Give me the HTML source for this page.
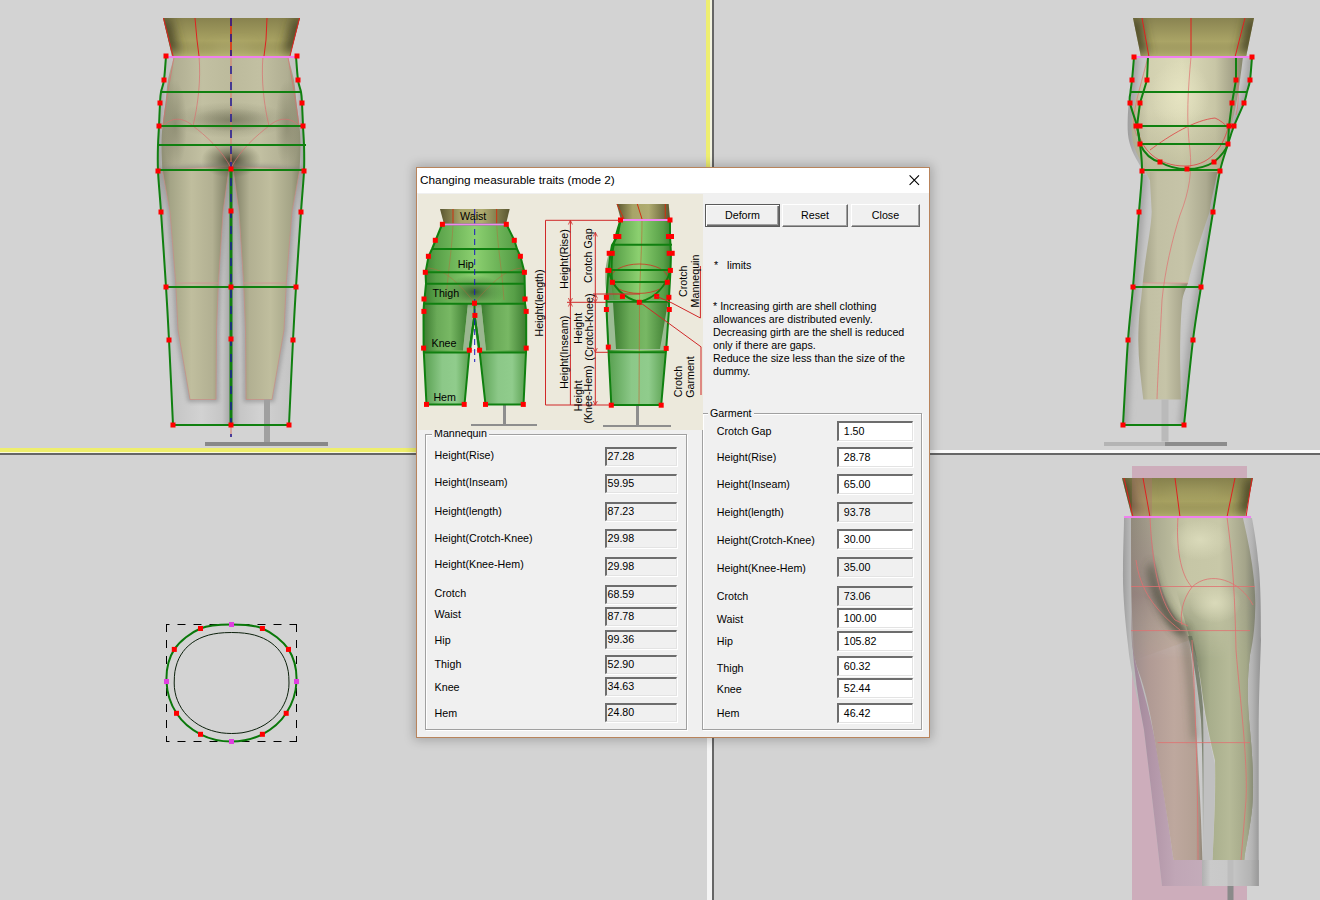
<!DOCTYPE html>
<html><head><meta charset="utf-8">
<style>
*{box-sizing:border-box}
html,body{margin:0;padding:0;width:1320px;height:900px;overflow:hidden;background:#d3d3d3;font-family:"Liberation Sans",sans-serif}
.abs{position:absolute}
#bg{position:absolute;left:0;top:0}
#dlg{position:absolute;left:416px;top:167px;width:514px;height:571px;border:1px solid #b8845c;background:#f0f0f0;box-shadow:0 0 10px 2px rgba(0,0,0,0.22)}
#title{position:absolute;left:0;top:0;width:512px;height:25px;background:#fff}
#title span{position:absolute;left:3px;top:5px;font-size:11.8px;color:#000;white-space:nowrap}
.t{position:absolute;font-size:10.7px;color:#000;white-space:nowrap;line-height:13px}
.btn{position:absolute;top:36px;height:23px;background:#f0f0f0;border:1px solid;border-color:#fff #696969 #696969 #fff;box-shadow:inset -1px -1px 0 #a0a0a0}
.btn span{position:absolute;left:0;right:0;top:4px;text-align:center;font-size:10.7px;line-height:13px}
.btn.def{border:1px solid #5a5a5a;box-shadow:inset 1px 1px 0 #fff, inset -1px -1px 0 #696969, inset -2px -2px 0 #a0a0a0}
.btn.def span{top:4px}
.grp{position:absolute;border:1px solid #a0a0a0;box-shadow:1px 1px 0 #fff, inset 1px 1px 0 #fff}
.gl{position:absolute;background:#f0f0f0;padding:0 2px;font-size:10.7px;line-height:12px}
.box{position:absolute;height:19px;border-top:2px solid #6d6d6d;border-left:2px solid #6d6d6d;border-right:1px solid #e3e3e3;border-bottom:1px solid #e3e3e3;box-shadow:1px 1px 0 #fff;background:#fff}
.box.dis{background:#f0f0f0}
.box span{position:absolute;left:1px;top:0.6px;font-size:10.7px;line-height:13px}
</style></head><body>
<svg id="bg" width="1320" height="900" viewBox="0 0 1320 900">
  <!-- dividers -->
  <rect x="0" y="448" width="710" height="4" fill="#eeee6c"/>
  <rect x="0" y="452" width="710" height="1" fill="#fafad8"/>
  <rect x="0" y="453" width="1320" height="2" fill="#666"/>
  <rect x="714" y="450" width="606" height="3" fill="#fafafa"/>
  <rect x="706" y="0" width="4" height="452" fill="#eeee70"/>
  <rect x="710" y="0" width="2" height="452" fill="#f4f4e0"/>
  <rect x="707" y="455" width="5" height="445" fill="#f4f4f4"/>
  <rect x="712" y="0" width="2" height="900" fill="#666"/>
  <g id="figs"><defs>
<linearGradient id="cone" x1="0" x2="1" y1="0" y2="0">
 <stop offset="0" stop-color="#4e4a28"/><stop offset="0.25" stop-color="#a09858"/><stop offset="0.5" stop-color="#b8b070"/><stop offset="0.75" stop-color="#a09858"/><stop offset="1" stop-color="#4e4a28"/></linearGradient>
<linearGradient id="cone2" x1="0" x2="1" y1="0" y2="0">
 <stop offset="0" stop-color="#4e4a28"/><stop offset="0.3" stop-color="#a8a060"/><stop offset="0.6" stop-color="#b8b070"/><stop offset="0.85" stop-color="#a09858"/><stop offset="1" stop-color="#4e4a28"/></linearGradient>
<linearGradient id="shell" x1="0" x2="1" y1="0" y2="0">
 <stop offset="0" stop-color="#a8a8a8"/><stop offset="0.12" stop-color="#c4c4c4"/><stop offset="0.5" stop-color="#d6d6d6"/><stop offset="0.88" stop-color="#c4c4c4"/><stop offset="1" stop-color="#a0a0a0"/></linearGradient>
<linearGradient id="leg" x1="0" x2="1" y1="0" y2="0">
 <stop offset="0" stop-color="#8c8c6c"/><stop offset="0.3" stop-color="#b4b494"/><stop offset="0.55" stop-color="#bcbc9c"/><stop offset="1" stop-color="#8a8a6c"/></linearGradient>
<linearGradient id="hip" x1="0" x2="1" y1="0" y2="0">
 <stop offset="0" stop-color="#8a8a6a"/><stop offset="0.15" stop-color="#b0b090"/><stop offset="0.5" stop-color="#bdbd9d"/><stop offset="0.85" stop-color="#b0b090"/><stop offset="1" stop-color="#8a8a6a"/></linearGradient>
<radialGradient id="crotch" cx="0.5" cy="0.5" r="0.5">
 <stop offset="0" stop-color="#404030" stop-opacity="0.9"/><stop offset="0.6" stop-color="#606048" stop-opacity="0.35"/><stop offset="1" stop-color="#808060" stop-opacity="0"/></radialGradient>
<linearGradient id="side" x1="0" x2="1" y1="0" y2="0">
 <stop offset="0" stop-color="#a0a080"/><stop offset="0.2" stop-color="#cfcfa8"/><stop offset="0.5" stop-color="#dcdcb4"/><stop offset="0.8" stop-color="#c4c49c"/><stop offset="1" stop-color="#8a8a6a"/></linearGradient>
<linearGradient id="shell3" x1="0" x2="1" y1="0" y2="0">
 <stop offset="0" stop-color="#909090"/><stop offset="0.1" stop-color="#b8b8b8"/><stop offset="0.5" stop-color="#d8d8d8"/><stop offset="0.9" stop-color="#b8b8b8"/><stop offset="1" stop-color="#909090"/></linearGradient>
<linearGradient id="leg3" x1="0" x2="1" y1="0" y2="0">
 <stop offset="0" stop-color="#8a9070"/><stop offset="0.4" stop-color="#b4b894"/><stop offset="0.7" stop-color="#b0b490"/><stop offset="1" stop-color="#7c8064"/></linearGradient>
<linearGradient id="side3" x1="0" x2="1" y1="0" y2="0">
 <stop offset="0" stop-color="#909078"/><stop offset="0.4" stop-color="#c4c4a4"/><stop offset="0.6" stop-color="#d0d0b0"/><stop offset="0.9" stop-color="#a0a088"/><stop offset="1" stop-color="#707060"/></linearGradient>
<linearGradient id="pleg" x1="0" x2="1" y1="0" y2="0">
 <stop offset="0" stop-color="#9c8a8a"/><stop offset="0.4" stop-color="#bca8a0"/><stop offset="0.8" stop-color="#b8a498"/><stop offset="1" stop-color="#8a8070"/></linearGradient>
<linearGradient id="cone3" x1="0" x2="1" y1="0" y2="0">
 <stop offset="0" stop-color="#4e4a28"/><stop offset="0.3" stop-color="#8c8848"/><stop offset="0.55" stop-color="#aaa460"/><stop offset="0.8" stop-color="#8c8848"/><stop offset="1" stop-color="#4e4a28"/></linearGradient>
<linearGradient id="conev" x1="0" x2="0" y1="0" y2="1"><stop offset="0" stop-color="#3c3820" stop-opacity="0.3"/><stop offset="0.6" stop-color="#3c3820" stop-opacity="0"/><stop offset="1" stop-color="#d0cc8a" stop-opacity="0.35"/></linearGradient>
</defs>
<g id='f1'><defs>
<linearGradient id="f1shL" x1="157" x2="231" y1="0" y2="0" gradientUnits="userSpaceOnUse">
 <stop offset="0" stop-color="#9c9c9c"/><stop offset="0.12" stop-color="#c2c2c2"/><stop offset="0.6" stop-color="#d2d2d2"/><stop offset="0.88" stop-color="#c6c6c6"/><stop offset="1" stop-color="#a4a4a4"/></linearGradient>
<linearGradient id="f1shR" x1="231" x2="306" y1="0" y2="0" gradientUnits="userSpaceOnUse">
 <stop offset="0" stop-color="#a4a4a4"/><stop offset="0.12" stop-color="#c6c6c6"/><stop offset="0.4" stop-color="#d2d2d2"/><stop offset="0.88" stop-color="#c2c2c2"/><stop offset="1" stop-color="#9c9c9c"/></linearGradient>
<linearGradient id="f1legL" x1="160" x2="230" y1="0" y2="0" gradientUnits="userSpaceOnUse">
 <stop offset="0" stop-color="#7e7e62"/><stop offset="0.15" stop-color="#a4a486"/><stop offset="0.45" stop-color="#c0be9e"/><stop offset="0.75" stop-color="#b2b092"/><stop offset="1" stop-color="#7a7a60"/></linearGradient>
<linearGradient id="f1legR" x1="232" x2="302" y1="0" y2="0" gradientUnits="userSpaceOnUse">
 <stop offset="0" stop-color="#7a7a60"/><stop offset="0.25" stop-color="#b2b092"/><stop offset="0.55" stop-color="#c0be9e"/><stop offset="0.85" stop-color="#a4a486"/><stop offset="1" stop-color="#7e7e62"/></linearGradient>
<linearGradient id="f1hip" x1="160" x2="302" y1="0" y2="0" gradientUnits="userSpaceOnUse">
 <stop offset="0" stop-color="#8a8a70"/><stop offset="0.1" stop-color="#b0ae92"/><stop offset="0.3" stop-color="#c2c0a2"/><stop offset="0.5" stop-color="#bcba9c"/><stop offset="0.7" stop-color="#c2c0a2"/><stop offset="0.9" stop-color="#b0ae92"/><stop offset="1" stop-color="#8a8a70"/></linearGradient>
<radialGradient id="f1dark" cx="0.5" cy="0.5" r="0.5">
 <stop offset="0" stop-color="#3a3a2a" stop-opacity="0.95"/><stop offset="0.5" stop-color="#5a5a44" stop-opacity="0.5"/><stop offset="1" stop-color="#6a6a50" stop-opacity="0"/></radialGradient>
<radialGradient id="f1band" cx="0.5" cy="0.5" r="0.5">
 <stop offset="0" stop-color="#6a6a52" stop-opacity="0.45"/><stop offset="1" stop-color="#6a6a52" stop-opacity="0"/></radialGradient>
<linearGradient id="f1cone" x1="163" x2="300" y1="0" y2="0" gradientUnits="userSpaceOnUse">
 <stop offset="0" stop-color="#4a4628"/><stop offset="0.15" stop-color="#7a7444"/><stop offset="0.35" stop-color="#aaa266"/><stop offset="0.5" stop-color="#b4ac6e"/><stop offset="0.65" stop-color="#aaa266"/><stop offset="0.85" stop-color="#7a7444"/><stop offset="1" stop-color="#4a4628"/></linearGradient>
<filter id="f1blur2" x="-30%" y="-30%" width="160%" height="160%"><feGaussianBlur stdDeviation="6"/></filter>
</defs><polygon points="166,56 164,80 161,92 160,103 159,126 158,145 158,171 161,212 166,287 169,340 173,425 231,425 231,169 231,56" fill="url(#f1shL)"/><polygon points="231,56 231,169 231,425 289,425 293,340 296,287 301,212 304,171 304,145 303,126 302,103 301,92 298,80 296,56" fill="url(#f1shR)"/><path d="M174,57 C173.0,60.8 169.4,72.3 168,80 C166.6,87.7 166.4,95.3 165.5,103 C164.6,110.7 163.2,119.0 162.5,126 C161.8,133.0 161.5,137.7 161.5,145 C161.5,152.3 162.2,165.8 162.3,170 L299.7,170 C299.8,165.8 300.5,152.3 300.5,145 C300.5,137.7 300.2,133.0 299.5,126 C298.8,119.0 297.4,110.7 296.5,103 C295.6,95.3 295.4,87.7 294,80 C292.6,72.3 289.0,60.8 288,57 Z" fill="url(#f1hip)"/><filter id="f1blur" x="-20%" y="-5%" width="140%" height="110%"><feGaussianBlur stdDeviation="2"/></filter><g filter="url(#f1blur)" opacity="0.55"><polygon points="162.3,170 170,212 175.7,283 178,330 190,399.5 216,399.5 216.5,330 218.4,283 223,212 228.5,172 231,166" fill="none" stroke="#7a7a7a" stroke-width="5"/><polygon points="299.7,170 292,212 286.3,283 284,330 272,399.5 246,399.5 245.5,330 243.6,283 239,212 233.5,172 231,166" fill="none" stroke="#7a7a7a" stroke-width="5"/></g><polygon points="162.3,170 170,212 175.7,283 178,330 190,399.5 216,399.5 216.5,330 218.4,283 223,212 228.5,172 231,166" fill="url(#f1legL)" stroke="#c88c84" stroke-width="0.7"/><polygon points="299.7,170 292,212 286.3,283 284,330 272,399.5 246,399.5 245.5,330 243.6,283 239,212 233.5,172 231,166" fill="url(#f1legR)" stroke="#c88c84" stroke-width="0.7"/><ellipse cx="231" cy="120" rx="60" ry="18" fill="url(#f1band)"/><ellipse cx="231" cy="120" rx="40" ry="12" fill="url(#f1band)"/><ellipse cx="231" cy="160" rx="30" ry="18" fill="url(#f1dark)"/><ellipse cx="175" cy="125" rx="12" ry="45" fill="url(#f1band)"/><ellipse cx="287" cy="125" rx="12" ry="45" fill="url(#f1band)"/><path d="M175.7,283 L218.4,283 M243.6,283 L286.3,283" stroke="#d09090" stroke-width="0.8"/><path d="M199,56 C201,80 198,105 193,126 M263,56 C261,80 264,105 269,126 M163,126 C170,118 182,116 193,126 C205,135 222,150 231,168 M299,126 C292,118 280,116 269,126 C257,135 240,150 231,168 M174,57 C170,80 166,100 163,126 M288,57 C292,80 296,100 299,126" fill="none" stroke="#d87070" stroke-width="0.7"/><polygon points="163,18 300,18 290,56 172,56" fill="#a8a262"/><clipPath id="f1cc"><polygon points="163,18 300,18 290,56 172,56"/></clipPath><g clip-path="url(#f1cc)"><g filter="url(#f1blur2)"><path d="M163,18 L173,56 M300,18 L290,56" stroke="#3e3a20" stroke-width="14" opacity="0.9"/><path d="M215,50 L250,50" stroke="#c0bc80" stroke-width="10" opacity="0.5"/></g></g><polygon points="163,18 300,18 290,56 172,56" fill="url(#conev)"/><path d="M163.5,18 L173,56 M299.5,18 L290,56 M195,18 L197,40 L199,56 M267,18 L266,40 L264,56 " stroke="#e02020" stroke-width="1" fill="none"/><path d="M231,18 L231,56" stroke="#e03010" stroke-width="1.6"/><path d="M231,56 L231,437" stroke="#d87a6a" stroke-width="1"/><rect x="264" y="399.5" width="6" height="44" fill="#a0a0a0"/><rect x="205" y="442" width="123" height="4" fill="#888888"/><path d="M166,56 C165.7,60.0 164.8,74.0 164,80 C163.2,86.0 161.7,88.2 161,92 C160.3,95.8 160.3,97.3 160,103 C159.7,108.7 159.3,119.0 159,126 C158.7,133.0 158.2,137.5 158,145 C157.8,152.5 157.5,159.8 158,171 C158.5,182.2 159.7,192.7 161,212 C162.3,231.3 164.7,265.7 166,287 C167.3,308.3 167.8,317.0 169,340 C170.2,363.0 172.3,410.8 173,425" fill="none" stroke="#108010" stroke-width="2"/><path d="M296,56 C296.3,60.0 297.2,74.0 298,80 C298.8,86.0 300.3,88.2 301,92 C301.7,95.8 301.7,97.3 302,103 C302.3,108.7 302.7,119.0 303,126 C303.3,133.0 303.8,137.5 304,145 C304.2,152.5 304.5,159.8 304,171 C303.5,182.2 302.3,192.7 301,212 C299.7,231.3 297.3,265.7 296,287 C294.7,308.3 294.2,317.0 293,340 C291.8,363.0 289.7,410.8 289,425" fill="none" stroke="#108010" stroke-width="2"/><line x1="161" y1="92" x2="301" y2="92" stroke="#108010" stroke-width="2"/><line x1="159" y1="126" x2="303" y2="126" stroke="#108010" stroke-width="2"/><line x1="157" y1="145" x2="306" y2="145" stroke="#108010" stroke-width="2"/><line x1="158" y1="170" x2="304" y2="170" stroke="#108010" stroke-width="2"/><line x1="166" y1="287" x2="296" y2="287" stroke="#108010" stroke-width="2"/><line x1="173" y1="425" x2="289" y2="425" stroke="#108010" stroke-width="2"/><line x1="231" y1="169" x2="231" y2="425" stroke="#108010" stroke-width="3"/><line x1="231" y1="18" x2="231" y2="437" stroke="#1a1a98" stroke-width="1.5" stroke-dasharray="8,8"/><line x1="166" y1="57" x2="297" y2="57" stroke="#f080f0" stroke-width="2"/><rect x="163.5" y="53.5" width="5" height="5" fill="#ff0000"/><rect x="294.5" y="53.5" width="5" height="5" fill="#ff0000"/><rect x="161.5" y="77.5" width="5" height="5" fill="#ff0000"/><rect x="295.5" y="77.5" width="5" height="5" fill="#ff0000"/><rect x="157.5" y="100.5" width="5" height="5" fill="#ff0000"/><rect x="299.5" y="100.5" width="5" height="5" fill="#ff0000"/><rect x="156.5" y="123.5" width="5" height="5" fill="#ff0000"/><rect x="300.5" y="123.5" width="5" height="5" fill="#ff0000"/><rect x="155.5" y="168.5" width="5" height="5" fill="#ff0000"/><rect x="228.5" y="166.5" width="5" height="5" fill="#ff0000"/><rect x="301.5" y="168.5" width="5" height="5" fill="#ff0000"/><rect x="158.5" y="209.5" width="5" height="5" fill="#ff0000"/><rect x="228.5" y="208.5" width="5" height="5" fill="#ff0000"/><rect x="298.5" y="209.5" width="5" height="5" fill="#ff0000"/><rect x="163.5" y="284.5" width="5" height="5" fill="#ff0000"/><rect x="228.5" y="284.5" width="5" height="5" fill="#ff0000"/><rect x="293.5" y="284.5" width="5" height="5" fill="#ff0000"/><rect x="166.5" y="337.5" width="5" height="5" fill="#ff0000"/><rect x="228.5" y="336.5" width="5" height="5" fill="#ff0000"/><rect x="290.5" y="337.5" width="5" height="5" fill="#ff0000"/><rect x="170.5" y="422.5" width="5" height="5" fill="#ff0000"/><rect x="228.5" y="422.5" width="5" height="5" fill="#ff0000"/><rect x="286.5" y="422.5" width="5" height="5" fill="#ff0000"/></g><g id='f2'><defs>
<linearGradient id="f2sh" x1="1120" x2="1262" y1="0" y2="0" gradientUnits="userSpaceOnUse">
 <stop offset="0" stop-color="#a0a0a0"/><stop offset="0.08" stop-color="#bcbcbc"/><stop offset="0.2" stop-color="#c8c8c8"/><stop offset="0.55" stop-color="#d0d0d0"/><stop offset="0.75" stop-color="#c0c0c0"/><stop offset="0.9" stop-color="#a8a8a8"/><stop offset="1" stop-color="#9a9a9a"/></linearGradient>
<linearGradient id="f2body" x1="0" x2="1" y1="0" y2="0">
 <stop offset="0" stop-color="#b4b296"/><stop offset="0.15" stop-color="#d2d0b0"/><stop offset="0.45" stop-color="#dcdab8"/><stop offset="0.75" stop-color="#c8c6a6"/><stop offset="0.92" stop-color="#a2a086"/><stop offset="1" stop-color="#84846a"/></linearGradient>
<linearGradient id="f2leg" x1="0" x2="1" y1="0" y2="0">
 <stop offset="0" stop-color="#a4a288"/><stop offset="0.2" stop-color="#c2c0a4"/><stop offset="0.55" stop-color="#c6c4a8"/><stop offset="0.85" stop-color="#acaa90"/><stop offset="1" stop-color="#8a8a70"/></linearGradient>
<linearGradient id="f2vd" x1="0" x2="0" y1="110" y2="182" gradientUnits="userSpaceOnUse"><stop offset="0" stop-color="#8e8c70" stop-opacity="0"/><stop offset="1" stop-color="#8e8c70" stop-opacity="0.4"/></linearGradient>
<linearGradient id="f2cone" x1="1133" x2="1254" y1="0" y2="0" gradientUnits="userSpaceOnUse">
 <stop offset="0" stop-color="#4a4628"/><stop offset="0.15" stop-color="#7c7646"/><stop offset="0.45" stop-color="#aca468"/><stop offset="0.7" stop-color="#a8a064"/><stop offset="0.9" stop-color="#7a7444"/><stop offset="1" stop-color="#4a4628"/></linearGradient>
<radialGradient id="f2hl" cx="0.5" cy="0.5" r="0.5">
 <stop offset="0" stop-color="#e8e6c4" stop-opacity="0.8"/><stop offset="1" stop-color="#e8e6c4" stop-opacity="0"/></radialGradient>
</defs><polygon points="1134,57 1132,80 1130.5,92 1130,103 1137,126 1140,144 1142,171 1139,212 1133,287 1128,340 1123,425 1184,425 1193,340 1201,287 1213,212 1220,171 1228,144 1234,126 1244,103 1247,92 1250,80 1252,57" fill="#c8c8c8"/><clipPath id="f2clip"><polygon points="1134,57 1132,80 1130.5,92 1130,103 1137,126 1140,144 1142,171 1139,212 1133,287 1128,340 1123,425 1184,425 1193,340 1201,287 1213,212 1220,171 1228,144 1234,126 1244,103 1247,92 1250,80 1252,57"/></clipPath><filter id="f2blur" x="-20%" y="-5%" width="140%" height="110%"><feGaussianBlur stdDeviation="2.5"/></filter><g clip-path="url(#f2clip)"><g filter="url(#f2blur)"><path d="M1134,57 C1133.7,60.8 1132.6,74.2 1132,80 C1131.4,85.8 1130.8,88.2 1130.5,92 C1130.2,95.8 1128.9,97.3 1130,103 C1131.1,108.7 1135.3,119.2 1137,126 C1138.7,132.8 1139.2,136.5 1140,144 C1140.8,151.5 1142.2,159.7 1142,171 C1141.8,182.3 1140.5,192.7 1139,212 C1137.5,231.3 1134.8,265.7 1133,287 C1131.2,308.3 1129.7,317.0 1128,340 C1126.3,363.0 1123.8,410.8 1123,425" fill="none" stroke="#a8a8a8" stroke-width="14" opacity="0.6"/><path d="M1134,57 C1133.7,60.8 1132.6,74.2 1132,80 C1131.4,85.8 1130.8,88.2 1130.5,92 C1130.2,95.8 1128.9,97.3 1130,103 C1131.1,108.7 1135.3,119.2 1137,126 C1138.7,132.8 1139.2,136.5 1140,144 C1140.8,151.5 1142.2,159.7 1142,171 C1141.8,182.3 1140.5,192.7 1139,212 C1137.5,231.3 1134.8,265.7 1133,287 C1131.2,308.3 1129.7,317.0 1128,340 C1126.3,363.0 1123.8,410.8 1123,425" fill="none" stroke="#9a9a9a" stroke-width="6" opacity="0.6"/><path d="M1252,57 C1251.7,60.8 1250.8,74.2 1250,80 C1249.2,85.8 1248.0,88.2 1247,92 C1246.0,95.8 1246.2,97.3 1244,103 C1241.8,108.7 1236.7,119.2 1234,126 C1231.3,132.8 1230.3,136.5 1228,144 C1225.7,151.5 1222.5,159.7 1220,171 C1217.5,182.3 1216.2,192.7 1213,212 C1209.8,231.3 1204.3,265.7 1201,287 C1197.7,308.3 1195.8,317.0 1193,340 C1190.2,363.0 1185.5,410.8 1184,425" fill="none" stroke="#a8a8a8" stroke-width="14" opacity="0.6"/><path d="M1252,57 C1251.7,60.8 1250.8,74.2 1250,80 C1249.2,85.8 1248.0,88.2 1247,92 C1246.0,95.8 1246.2,97.3 1244,103 C1241.8,108.7 1236.7,119.2 1234,126 C1231.3,132.8 1230.3,136.5 1228,144 C1225.7,151.5 1222.5,159.7 1220,171 C1217.5,182.3 1216.2,192.7 1213,212 C1209.8,231.3 1204.3,265.7 1201,287 C1197.7,308.3 1195.8,317.0 1193,340 C1190.2,363.0 1185.5,410.8 1184,425" fill="none" stroke="#9a9a9a" stroke-width="6" opacity="0.6"/></g></g><defs><linearGradient id="f2bul" x1="1124" x2="1152" y1="0" y2="0" gradientUnits="userSpaceOnUse"><stop offset="0" stop-color="#969696"/><stop offset="0.4" stop-color="#b0b0b0"/><stop offset="1" stop-color="#bcbcbc"/></linearGradient></defs><path d="M1131,92 C1128,102 1127.5,118 1127.7,130 C1128,142 1132,152 1138,162 C1141,167 1142,170 1142.5,175 L1150,175 L1150,92 Z" fill="url(#f2bul)"/><path d="M1148,57 C1147.0,60.8 1144.2,72.8 1142,80 C1139.8,87.2 1136.7,93.3 1135,100 C1133.3,106.7 1132.3,113.0 1132,120 C1131.7,127.0 1131.7,135.3 1133,142 C1134.3,148.7 1137.2,153.7 1140,160 C1142.8,166.3 1148.1,176.7 1149.7,180 L1216,180 C1217.0,176.7 1219.8,167.5 1222,160 C1224.2,152.5 1226.7,144.2 1229,135 C1231.3,125.8 1234.2,114.2 1236,105 C1237.8,95.8 1238.8,88.0 1240,80 C1241.2,72.0 1242.5,60.8 1243,57 Z" fill="url(#f2body)"/><path d="M1148,57 C1147.0,60.8 1144.2,72.8 1142,80 C1139.8,87.2 1136.7,93.3 1135,100 C1133.3,106.7 1132.3,113.0 1132,120 C1131.7,127.0 1131.7,135.3 1133,142 C1134.3,148.7 1137.2,153.7 1140,160 C1142.8,166.3 1148.1,176.7 1149.7,180 L1216,180 C1217.0,176.7 1219.8,167.5 1222,160 C1224.2,152.5 1226.7,144.2 1229,135 C1231.3,125.8 1234.2,114.2 1236,105 C1237.8,95.8 1238.8,88.0 1240,80 C1241.2,72.0 1242.5,60.8 1243,57 Z" fill="url(#f2vd)"/><path d="M1149.7,172 L1217.4,172 C1214,190 1211,200 1209.6,212 C1200,240 1192,265 1188,283 L1142.7,283 C1146,250 1151,230 1151.7,212 C1151,195 1150,185 1149.7,172 Z" fill="url(#f2leg)"/><path d="M1142.7,283 L1188,283 C1185,290 1183,295 1182.3,300 C1180.5,320 1180,340 1180.1,360 L1180.9,399.6 L1143.3,399.6 C1141,380 1138.3,360 1138.3,340 C1138.5,320 1140,305 1141,300 Z" fill="url(#f2leg)"/><ellipse cx="1180" cy="95" rx="30" ry="35" fill="url(#f2hl)"/><line x1="1143" y1="283" x2="1188" y2="283" stroke="#e09090" stroke-width="0.8"/><path d="M1191,57 C1188,90 1186,120 1190,150 C1192,170 1190,190 1180,215 C1172,240 1165,270 1162,300 C1160,340 1158,370 1157,399" fill="none" stroke="#e07070" stroke-width="0.7"/><path d="M1137,126 C1140,150 1158,166 1185,166 C1208,166 1222,150 1228,128 M1150,150 C1170,135 1195,120 1215,118 C1220,120 1225,124 1228,128" fill="none" stroke="#e04040" stroke-width="0.8"/><path d="M1148,57 C1142,80 1136,100 1134,115 C1133,125 1135,132 1137,136 M1235,57 C1238,80 1240,100 1236,115" fill="none" stroke="#e07070" stroke-width="0.7"/><polygon points="1133,18 1254,18 1246,57 1141,57" fill="#aaa466"/><clipPath id="f2cc"><polygon points="1133,18 1254,18 1246,57 1141,57"/></clipPath><g clip-path="url(#f2cc)"><g filter="url(#f1blur2)"><path d="M1133,18 L1141,57 M1254,18 L1246,57" stroke="#3e3a20" stroke-width="14" opacity="0.9"/></g></g><polygon points="1133,18 1254,18 1246,57 1141,57" fill="url(#conev)"/><path d="M1142,18 L1149,57 M1245,18 L1235,57 M1191,18 L1191,57" stroke="#e02020" stroke-width="1" fill="none"/><rect x="1161.5" y="399.6" width="7" height="42" fill="#bababa"/><rect x="1104" y="442" width="61" height="4" fill="#b4b4b4"/><rect x="1165" y="442" width="62" height="4" fill="#8c8c8c"/><path d="M1134,57 C1133.7,60.8 1132.6,74.2 1132,80 C1131.4,85.8 1130.8,88.2 1130.5,92 C1130.2,95.8 1128.9,97.3 1130,103 C1131.1,108.7 1135.3,119.2 1137,126 C1138.7,132.8 1139.2,136.5 1140,144 C1140.8,151.5 1142.2,159.7 1142,171 C1141.8,182.3 1140.5,192.7 1139,212 C1137.5,231.3 1134.8,265.7 1133,287 C1131.2,308.3 1129.7,317.0 1128,340 C1126.3,363.0 1123.8,410.8 1123,425" fill="none" stroke="#108010" stroke-width="2"/><path d="M1252,57 C1251.7,60.8 1250.8,74.2 1250,80 C1249.2,85.8 1248.0,88.2 1247,92 C1246.0,95.8 1246.2,97.3 1244,103 C1241.8,108.7 1236.7,119.2 1234,126 C1231.3,132.8 1230.3,136.5 1228,144 C1225.7,151.5 1222.5,159.7 1220,171 C1217.5,182.3 1216.2,192.7 1213,212 C1209.8,231.3 1204.3,265.7 1201,287 C1197.7,308.3 1195.8,317.0 1193,340 C1190.2,363.0 1185.5,410.8 1184,425" fill="none" stroke="#108010" stroke-width="2"/><path d="M1148,57 L1147,80 L1140,103 L1137,126 L1140,144 C1145,155 1152,160 1160,162 C1170,168 1180,169 1187,169 C1196,169 1206,167 1214,162 C1220,157 1226,150 1228,144 L1229,126 L1232,103 L1236,80 L1236,57" fill="none" stroke="#108010" stroke-width="2"/><line x1="1130" y1="92" x2="1247" y2="92" stroke="#108010" stroke-width="2"/><line x1="1137" y1="126" x2="1232" y2="126" stroke="#108010" stroke-width="2"/><line x1="1140" y1="144" x2="1228" y2="144" stroke="#108010" stroke-width="2"/><line x1="1143" y1="170" x2="1220" y2="170" stroke="#108010" stroke-width="2"/><line x1="1133" y1="287" x2="1201" y2="287" stroke="#108010" stroke-width="2"/><line x1="1123" y1="425" x2="1184" y2="425" stroke="#108010" stroke-width="2"/><line x1="1134" y1="57" x2="1252" y2="57" stroke="#f080f0" stroke-width="2"/><rect x="1131.5" y="54.5" width="5" height="5" fill="#ff0000"/><rect x="1249.5" y="54.5" width="5" height="5" fill="#ff0000"/><rect x="1129.5" y="77.5" width="5" height="5" fill="#ff0000"/><rect x="1144.5" y="77.5" width="5" height="5" fill="#ff0000"/><rect x="1233.5" y="77.5" width="5" height="5" fill="#ff0000"/><rect x="1247.5" y="77.5" width="5" height="5" fill="#ff0000"/><rect x="1127.5" y="100.5" width="5" height="5" fill="#ff0000"/><rect x="1137.5" y="100.5" width="5" height="5" fill="#ff0000"/><rect x="1229.5" y="100.5" width="5" height="5" fill="#ff0000"/><rect x="1241.5" y="100.5" width="5" height="5" fill="#ff0000"/><rect x="1133.5" y="123.5" width="5" height="5" fill="#ff0000"/><rect x="1137.5" y="123.5" width="5" height="5" fill="#ff0000"/><rect x="1226.5" y="123.5" width="5" height="5" fill="#ff0000"/><rect x="1231.5" y="123.5" width="5" height="5" fill="#ff0000"/><rect x="1137.5" y="141.5" width="5" height="5" fill="#ff0000"/><rect x="1225.5" y="141.5" width="5" height="5" fill="#ff0000"/><rect x="1157.5" y="159.5" width="5" height="5" fill="#ff0000"/><rect x="1211.5" y="159.5" width="5" height="5" fill="#ff0000"/><rect x="1184.5" y="166.5" width="5" height="5" fill="#ff0000"/><rect x="1139.5" y="168.5" width="5" height="5" fill="#ff0000"/><rect x="1217.5" y="168.5" width="5" height="5" fill="#ff0000"/><rect x="1136.5" y="209.5" width="5" height="5" fill="#ff0000"/><rect x="1210.5" y="209.5" width="5" height="5" fill="#ff0000"/><rect x="1130.5" y="284.5" width="5" height="5" fill="#ff0000"/><rect x="1198.5" y="284.5" width="5" height="5" fill="#ff0000"/><rect x="1125.5" y="337.5" width="5" height="5" fill="#ff0000"/><rect x="1190.5" y="337.5" width="5" height="5" fill="#ff0000"/><rect x="1120.5" y="422.5" width="5" height="5" fill="#ff0000"/><rect x="1181.5" y="422.5" width="5" height="5" fill="#ff0000"/></g><g id='f3'><defs>
<linearGradient id="f3sh" x1="1122" x2="1262" y1="0" y2="0" gradientUnits="userSpaceOnUse">
 <stop offset="0" stop-color="#9a9a9a"/><stop offset="0.06" stop-color="#b8b8b8"/><stop offset="0.5" stop-color="#cccccc"/><stop offset="0.86" stop-color="#c8c8c8"/><stop offset="0.93" stop-color="#b4b4b4"/><stop offset="1" stop-color="#8e8e8e"/></linearGradient>
<linearGradient id="f3body" x1="1130" x2="1258" y1="0" y2="0" gradientUnits="userSpaceOnUse">
 <stop offset="0" stop-color="#8c8c76"/><stop offset="0.15" stop-color="#a6a68c"/><stop offset="0.45" stop-color="#c6c6a6"/><stop offset="0.7" stop-color="#c8c8a8"/><stop offset="0.9" stop-color="#a4a48a"/><stop offset="1" stop-color="#76786a"/></linearGradient>
<linearGradient id="f3rleg" x1="1190" x2="1256" y1="0" y2="0" gradientUnits="userSpaceOnUse">
 <stop offset="0" stop-color="#7a8266"/><stop offset="0.3" stop-color="#a8ae8c"/><stop offset="0.6" stop-color="#b6ba98"/><stop offset="0.85" stop-color="#a4a888"/><stop offset="1" stop-color="#7e8270"/></linearGradient>
<linearGradient id="f3pleg" x1="1131" x2="1203" y1="0" y2="0" gradientUnits="userSpaceOnUse">
 <stop offset="0" stop-color="#9c8c8c"/><stop offset="0.25" stop-color="#b09a94"/><stop offset="0.6" stop-color="#bea89e"/><stop offset="0.9" stop-color="#b4a094"/><stop offset="1" stop-color="#8c8474"/></linearGradient>
<linearGradient id="f3pv" x1="0" x2="0" y1="518" y2="660" gradientUnits="userSpaceOnUse">
 <stop offset="0" stop-color="#9a8088" stop-opacity="0.25"/><stop offset="0.55" stop-color="#94787e" stop-opacity="0.6"/><stop offset="1" stop-color="#b09a96" stop-opacity="0.3"/></linearGradient>
<radialGradient id="f3crease" cx="0.5" cy="0.5" r="0.5">
 <stop offset="0" stop-color="#4a4e3a" stop-opacity="0.8"/><stop offset="0.6" stop-color="#5a5e48" stop-opacity="0.35"/><stop offset="1" stop-color="#5a5e48" stop-opacity="0"/></radialGradient>
<radialGradient id="f3hl" cx="0.5" cy="0.5" r="0.5">
 <stop offset="0" stop-color="#dcdcbc" stop-opacity="0.9"/><stop offset="1" stop-color="#dcdcbc" stop-opacity="0"/></radialGradient>
<linearGradient id="f3mg" x1="0" x2="0" y1="590" y2="660" gradientUnits="userSpaceOnUse"><stop offset="0" stop-color="#fff" stop-opacity="0"/><stop offset="1" stop-color="#fff" stop-opacity="1"/></linearGradient>
<mask id="f3mask" maskUnits="userSpaceOnUse" x="1100" y="500" width="200" height="400"><rect x="1100" y="500" width="200" height="400" fill="url(#f3mg)"/></mask>
<linearGradient id="f3mv" x1="1130" x2="1205" y1="0" y2="0" gradientUnits="userSpaceOnUse"><stop offset="0" stop-color="#9c8496"/><stop offset="0.3" stop-color="#b296a8"/><stop offset="0.6" stop-color="#c0a6b6"/><stop offset="1" stop-color="#c4acba"/></linearGradient>
<linearGradient id="f3bot" x1="1202" x2="1259" y1="0" y2="0" gradientUnits="userSpaceOnUse"><stop offset="0" stop-color="#b0b0b0"/><stop offset="0.15" stop-color="#cacaca"/><stop offset="0.5" stop-color="#c8c8c8"/><stop offset="0.85" stop-color="#b4b4b4"/><stop offset="1" stop-color="#989898"/></linearGradient>
</defs><rect x="1132" y="466" width="115" height="434" fill="#cdadbb"/><path d="M1124,518 L1252,518 C1255,535 1257,548 1258,560 C1261,580 1261,620 1261,640 C1260,670 1258.5,700 1258.7,741 L1258.7,886 L1162,886 C1156,830 1150,780 1144,730 C1138,700 1130,670 1128,645 C1125,620 1122.5,590 1123,570 C1123,550 1124,530 1124,518 Z" fill="url(#f3sh)"/><rect x="1202" y="860" width="56.7" height="26" fill="url(#f3bot)"/><path d="M1132,640 C1134,670 1138,700 1144,730 C1150,780 1156,830 1162,886 L1202,886 L1202,860 L1173.5,860 C1168,820 1162,780 1155,740 C1148,705 1140,680 1135,660 Z" fill="url(#f3mv)"/><path d="M1131,518 L1243,518 C1248,540 1252,560 1254,580 C1256,600 1256,630 1250,655 C1247,680 1247,700 1250,730 C1253,760 1254,790 1252,810 C1249,835 1245,850 1244.3,860 L1212.5,860 C1214,830 1216,790 1215,760 C1210,740 1206,720 1203,698 C1200,670 1195,650 1190,640 L1135,660 C1131,620 1131,560 1131,518 Z" fill="url(#f3body)"/><path d="M1175,585 L1190,640 C1195,650 1200,670 1203,698 C1206,720 1210,740 1215,760 C1216,790 1214,830 1212.5,860 L1244.3,860 C1245,850 1249,835 1252,810 C1254,790 1253,760 1250,730 C1247,700 1247,680 1250,655 L1258,585 Z" fill="url(#f3rleg)" mask="url(#f3mask)"/><path d="M1131,518 L1150,518 C1153,560 1160,590 1172,612 C1178,622 1184,630 1190,640 L1135,660 C1131,620 1131,560 1131,518 Z" fill="url(#f3pv)"/><path d="M1131,590 C1150,600 1170,612 1185,628 C1190,636 1192,660 1194,690 C1196,727 1199,770 1201,820 L1202.4,860 L1173.5,860 C1168,820 1163,790 1158,760 C1152,720 1146,690 1138,670 C1133,655 1131,640 1131,625 Z" fill="url(#f3pleg)" mask="url(#f3mask)"/><path d="M1188,636 C1194,660 1198,690 1201,720 C1203,760 1203,820 1203,860 L1206,860 C1207,820 1207,760 1204,720 C1202,690 1198,660 1192,636 Z" fill="#6e7660" opacity="0.8"/><path d="M1203,705 C1207,730 1212,750 1215,765 C1215,800 1214,830 1212.5,860 L1203,860 C1203,820 1204,760 1203,705 Z" fill="#c0c0c0"/><filter id="f3blur" x="-50%" y="-50%" width="200%" height="200%"><feGaussianBlur stdDeviation="4"/></filter><path d="M1152,560 C1158,590 1168,615 1188,630 L1180,634 C1165,625 1152,600 1148,570 Z" fill="#3e4232" opacity="0.75" filter="url(#f3blur)"/><path d="M1160,590 C1166,610 1175,622 1188,630 C1192,660 1195,700 1198,740 L1193,740 C1190,700 1187,660 1183,640 C1172,630 1164,615 1160,590 Z" fill="#4a4e3a" opacity="0.5" filter="url(#f3blur)"/><ellipse cx="1215" cy="603" rx="26" ry="20" fill="url(#f3hl)"/><ellipse cx="1200" cy="540" rx="30" ry="20" fill="url(#f3hl)"/><rect x="1227.5" y="860" width="6" height="26" fill="#bdbdbd"/><rect x="1227.5" y="886" width="6" height="14" fill="#8a8a8a"/><path d="M1131,586.5 L1255,586.5 M1131,630.6 L1250,630.6 M1157.6,742.6 L1250,742.6" stroke="#e07070" stroke-width="0.8" fill="none"/><path d="M1150,517 C1152,560 1158,600 1175,620 L1188,626 M1178,517 C1176,545 1180,575 1192,587 M1227,517 C1233,560 1235,600 1236,650 C1240,700 1248,760 1246,800 L1241,860 M1192,587 C1210,570 1240,580 1253,605 M1192,587 C1182,600 1180,615 1182,625 M1192,640 C1195,700 1198,780 1198,860 M1136,560 C1140,590 1155,610 1180,630" stroke="#e07070" stroke-width="0.8" fill="none"/><polygon points="1122,478 1253,478 1245,517 1132,517" fill="#a6a060"/><clipPath id="f3cc"><polygon points="1122,478 1253,478 1245,517 1132,517"/></clipPath><g clip-path="url(#f3cc)"><g filter="url(#f1blur2)"><path d="M1122,478 L1132,517 M1253,478 L1245,517" stroke="#3e3a20" stroke-width="14" opacity="0.9"/><path d="M1170,490 L1220,490" stroke="#b8b470" stroke-width="10" opacity="0.5"/></g></g><polygon points="1122,478 1253,478 1245,517 1132,517" fill="url(#conev)"/><polygon points="1132,478 1152,478 1152,517 1132,517" fill="#b07070" opacity="0.35"/><path d="M1124,478 L1133,517 M1143,478 L1150,517 M1175,478 L1180,517 M1235,478 L1227,517 M1252,478 L1246,517" stroke="#e02020" stroke-width="1" fill="none"/><line x1="1124" y1="517" x2="1251" y2="517" stroke="#f080f0" stroke-width="2"/></g><g id='f4'><path d="M166.5,624.5 L297,624.5" stroke="#000" stroke-width="1" stroke-dasharray="8,8" stroke-dashoffset="5"/><path d="M166.5,741.5 L297,741.5" stroke="#000" stroke-width="1" stroke-dasharray="8,8" stroke-dashoffset="5"/><path d="M166.5,624 L166.5,742" stroke="#000" stroke-width="1" stroke-dasharray="8,8"/><path d="M296.5,624 L296.5,742" stroke="#000" stroke-width="1" stroke-dasharray="8,8"/><path d="M231.5,624.5 C241.8,624.5 252.9,624.4 262.4,628.5 C271.9,632.6 282.8,640.6 288.5,649.4 C294.2,658.2 296.9,670.9 296.5,681.5 C296.1,692.1 291.9,704.5 286.2,713.3 C280.5,722.1 271.5,729.6 262.4,734.3 C253.3,739.0 241.8,741.5 231.5,741.5 C221.2,741.5 209.7,739.0 200.5,734.3 C191.3,729.6 182.2,722.1 176.5,713.3 C170.8,704.5 166.9,692.1 166.5,681.5 C166.1,670.9 168.6,658.2 174.3,649.4 C180.0,640.6 191.0,632.6 200.5,628.5 C210.0,624.4 221.2,624.5 231.5,624.5 Z" fill="none" stroke="#0a780a" stroke-width="2"/><polygon points="289.0,683.0 288.8,687.7 288.1,692.2 287.1,696.5 285.6,700.7 283.7,704.8 281.5,708.7 278.8,712.4 275.9,715.8 272.5,719.0 268.9,721.9 265.0,724.6 260.8,726.9 256.4,728.9 251.8,730.5 247.0,731.8 242.0,732.8 236.9,733.3 231.6,733.5 226.3,733.3 221.2,732.8 216.2,731.8 211.4,730.5 206.8,728.9 202.4,726.9 198.2,724.6 194.3,721.9 190.7,719.0 187.3,715.8 184.4,712.4 181.7,708.7 179.5,704.8 177.6,700.7 176.1,696.5 175.1,692.2 174.4,687.7 174.2,683.0 174.4,676.7 174.9,671.6 175.9,667.0 177.2,662.7 178.8,658.7 180.8,655.0 183.2,651.5 185.8,648.3 188.9,645.4 192.2,642.7 195.8,640.4 199.8,638.3 204.0,636.6 208.6,635.1 213.4,634.0 218.7,633.2 224.4,632.7 231.6,632.5 238.8,632.7 244.5,633.2 249.8,634.0 254.6,635.1 259.2,636.6 263.4,638.3 267.4,640.4 271.0,642.7 274.3,645.4 277.4,648.3 280.0,651.5 282.4,655.0 284.4,658.7 286.0,662.7 287.3,667.0 288.3,671.6 288.8,676.7 289.0,683.0" fill="none" stroke="#0c200c" stroke-width="1"/><rect x="198.0" y="626.0" width="5" height="5" fill="#ff0000"/><rect x="259.9" y="626.0" width="5" height="5" fill="#ff0000"/><rect x="171.8" y="646.9" width="5" height="5" fill="#ff0000"/><rect x="286.0" y="646.9" width="5" height="5" fill="#ff0000"/><rect x="174.0" y="710.8" width="5" height="5" fill="#ff0000"/><rect x="283.7" y="710.8" width="5" height="5" fill="#ff0000"/><rect x="198.0" y="731.8" width="5" height="5" fill="#ff0000"/><rect x="259.9" y="731.8" width="5" height="5" fill="#ff0000"/><rect x="229.0" y="622.0" width="5" height="5" fill="#e040e0"/><rect x="164.0" y="679.0" width="5" height="5" fill="#e040e0"/><rect x="294.0" y="679.0" width="5" height="5" fill="#e040e0"/><rect x="229.0" y="739.0" width="5" height="5" fill="#e040e0"/></g></g><!--/figs-->
</svg>

<div id="dlg">
  <div id="title"><span>Changing measurable traits (mode 2)</span>
    <svg class="abs" style="left:492px;top:7px" width="11" height="11"><path d="M0.6 0.4L10 9.8M10 0.4L0.6 9.8" stroke="#000" stroke-width="1.1"/></svg>
  </div>
  <div class="abs" style="left:1px;top:26px;width:285px;height:236px;background:#ece9dc"></div>

  <div class="btn def" style="left:288px;width:75px"><span>Deform</span></div>
  <div class="btn" style="left:365px;width:66px"><span>Reset</span></div>
  <div class="btn" style="left:434px;width:69px"><span>Close</span></div>

  <div class="t" style="left:297px;top:91px">*&nbsp;&nbsp; limits</div>
  <div class="t" style="left:296px;top:132px">* Increasing girth are shell clothing<br>allowances are distributed evenly.<br>Decreasing girth are the shell is reduced<br>only if there are gaps.<br>Reduce the size less than the size of the<br>dummy.</div>

  <div class="grp" style="left:8px;top:266px;width:262px;height:296px"></div>
  <div class="gl" style="left:15px;top:259px">Mannequin</div>
  <div class="grp" style="left:285px;top:245px;width:220px;height:317px"></div>
  <div class="gl" style="left:291px;top:239px">Garment</div>
<!--DLGROWS-->
<div class="t" style="left:17.6px;top:280.5px">Height(Rise)</div>
<div class="box dis" style="left:188px;top:279px;width:72px"><span style="left:0.5px;top:1.2px">27.28</span></div>
<div class="t" style="left:17.6px;top:308.0px">Height(Inseam)</div>
<div class="box dis" style="left:188px;top:306px;width:72px"><span style="left:0.5px;top:1.2px">59.95</span></div>
<div class="t" style="left:17.6px;top:337.3px">Height(length)</div>
<div class="box dis" style="left:188px;top:334px;width:72px"><span style="left:0.5px;top:1.2px">87.23</span></div>
<div class="t" style="left:17.6px;top:364.3px">Height(Crotch-Knee)</div>
<div class="box dis" style="left:188px;top:361px;width:72px"><span style="left:0.5px;top:1.2px">29.98</span></div>
<div class="t" style="left:17.6px;top:390.0px">Height(Knee-Hem)</div>
<div class="box dis" style="left:188px;top:389px;width:72px"><span style="left:0.5px;top:1.2px">29.98</span></div>
<div class="t" style="left:17.6px;top:418.5px">Crotch</div>
<div class="box dis" style="left:188px;top:417px;width:72px"><span style="left:0.5px;top:1.2px">68.59</span></div>
<div class="t" style="left:17.6px;top:439.8px">Waist</div>
<div class="box dis" style="left:188px;top:439px;width:72px"><span style="left:0.5px;top:1.2px">87.78</span></div>
<div class="t" style="left:17.6px;top:465.8px">Hip</div>
<div class="box dis" style="left:188px;top:462px;width:72px"><span style="left:0.5px;top:1.2px">99.36</span></div>
<div class="t" style="left:17.6px;top:490.3px">Thigh</div>
<div class="box dis" style="left:188px;top:487px;width:72px"><span style="left:0.5px;top:1.2px">52.90</span></div>
<div class="t" style="left:17.6px;top:513.4px">Knee</div>
<div class="box dis" style="left:188px;top:509px;width:72px"><span style="left:0.5px;top:1.2px">34.63</span></div>
<div class="t" style="left:17.6px;top:539.4px">Hem</div>
<div class="box dis" style="left:188px;top:535px;width:72px"><span style="left:0.5px;top:1.2px">24.80</span></div>
<div class="t" style="left:299.8px;top:257.3px">Crotch Gap</div>
<div class="box" style="left:420px;top:253px;width:76px;height:20px"><span style="left:4.7px;top:2.2px">1.50</span></div>
<div class="t" style="left:299.8px;top:283.4px">Height(Rise)</div>
<div class="box" style="left:420px;top:279px;width:76px;height:20px"><span style="left:4.7px;top:2.2px">28.78</span></div>
<div class="t" style="left:299.8px;top:310.4px">Height(Inseam)</div>
<div class="box" style="left:420px;top:306px;width:76px;height:20px"><span style="left:4.7px;top:2.2px">65.00</span></div>
<div class="t" style="left:299.8px;top:338.3px">Height(length)</div>
<div class="box dis" style="left:420px;top:334px;width:76px;height:20px"><span style="left:4.7px;top:2.2px">93.78</span></div>
<div class="t" style="left:299.8px;top:365.7px">Height(Crotch-Knee)</div>
<div class="box" style="left:420px;top:361px;width:76px;height:20px"><span style="left:4.7px;top:2.2px">30.00</span></div>
<div class="t" style="left:299.8px;top:394.4px">Height(Knee-Hem)</div>
<div class="box dis" style="left:420px;top:389px;width:76px;height:20px"><span style="left:4.7px;top:2.2px">35.00</span></div>
<div class="t" style="left:299.8px;top:422.2px">Crotch</div>
<div class="box dis" style="left:420px;top:418px;width:76px;height:20px"><span style="left:4.7px;top:2.2px">73.06</span></div>
<div class="t" style="left:299.8px;top:444.8px">Waist</div>
<div class="box" style="left:420px;top:440px;width:76px;height:20px"><span style="left:4.7px;top:2.2px">100.00</span></div>
<div class="t" style="left:299.8px;top:467.4px">Hip</div>
<div class="box" style="left:420px;top:463px;width:76px;height:20px"><span style="left:4.7px;top:2.2px">105.82</span></div>
<div class="t" style="left:299.8px;top:493.5px">Thigh</div>
<div class="box" style="left:420px;top:488px;width:76px;height:20px"><span style="left:4.7px;top:2.2px">60.32</span></div>
<div class="t" style="left:299.8px;top:514.7px">Knee</div>
<div class="box" style="left:420px;top:510px;width:76px;height:20px"><span style="left:4.7px;top:2.2px">52.44</span></div>
<div class="t" style="left:299.8px;top:539.3px">Hem</div>
<div class="box" style="left:420px;top:535px;width:76px;height:20px"><span style="left:4.7px;top:2.2px">46.42</span></div>
<!--/DLGROWS-->
</div>
<!--DIMG--><svg class="abs" style="left:0;top:0" width="1320" height="900" viewBox="0 0 1320 900">
<defs>
<linearGradient id="gbody" x1="0" x2="1" y1="0" y2="0">
 <stop offset="0" stop-color="#3a8030"/><stop offset="0.12" stop-color="#58a048"/><stop offset="0.5" stop-color="#8cd070"/><stop offset="0.88" stop-color="#58a048"/><stop offset="1" stop-color="#3a8030"/></linearGradient>
<linearGradient id="gthigh" x1="0" x2="1" y1="0" y2="0">
 <stop offset="0" stop-color="#3c7c30"/><stop offset="0.3" stop-color="#6aaa58"/><stop offset="0.6" stop-color="#78b864"/><stop offset="1" stop-color="#3c7c30"/></linearGradient>
<linearGradient id="glow" x1="0" x2="1" y1="0" y2="0">
 <stop offset="0" stop-color="#58a050"/><stop offset="0.4" stop-color="#8cc888"/><stop offset="0.7" stop-color="#90cc8c"/><stop offset="1" stop-color="#5aa050"/></linearGradient>
<linearGradient id="gcone" x1="0" x2="1" y1="0" y2="0">
 <stop offset="0" stop-color="#5a5630"/><stop offset="0.3" stop-color="#a8a468"/><stop offset="0.6" stop-color="#b0ac70"/><stop offset="1" stop-color="#5a5630"/></linearGradient>
<radialGradient id="gcrotch" cx="0.5" cy="0.5" r="0.5">
 <stop offset="0" stop-color="#2a4a20" stop-opacity="0.85"/><stop offset="0.6" stop-color="#3a6a30" stop-opacity="0.35"/><stop offset="1" stop-color="#3a6a30" stop-opacity="0"/></radialGradient>
</defs>
<rect x="418" y="194" width="285" height="236" fill="#ece9dc"/>
<polygon points="442,224.5 435.5,240.5 432,249 428.5,256.5 425.5,272.5 426,283.7 424.5,299 424,303.5 423.5,311 423.6,348 426.5,404.5 464.5,404.5 469.5,350.5 474.5,315.5 479.5,350.5 485.5,404.5 523.5,404.5 526.2,348 526.2,311 525,303.5 525,299 524.5,272.5 520.5,256.5 517,249 514.5,240.5 506.5,224.5" fill="url(#gbody)"/>
<polygon points="424,303 468,303 463,350.5 423.6,350" fill="url(#gthigh)"/><polygon points="481,303 526,303 526.2,350 486,350.5" fill="url(#gthigh)"/>
<polygon points="463,350.5 468,303 481,303 486,350.5" fill="#9ab690"/><polygon points="471.5,350.5 474.5,325 477.5,350.5" fill="#eef0e6"/>
<polygon points="424,352 469.5,352 464.5,404.5 426.5,404.5" fill="url(#glow)"/><polygon points="479.5,352 526.2,352 523.5,404.5 485.5,404.5" fill="url(#glow)"/>
<ellipse cx="474.5" cy="292" rx="30" ry="17" fill="url(#gcrotch)"/>
<path d="M453,224 C452,250 448,270 446,300 M496.7,224 C498,250 502,270 504,300 M426,268 C445,268 460,285 474,302 M524,268 C505,268 490,285 475,302" fill="none" stroke="#b86a3a" stroke-width="0.6" opacity="0.8"/>
<polygon points="440,209 509.7,209 506,224 444,224" fill="url(#gcone)"/>
<path d="M453,209 L453,224 M496.7,209 L496.7,224" stroke="#d03010" stroke-width="1"/>
<rect x="503" y="405" width="3" height="20" fill="#8e8e8e"/><rect x="471" y="424" width="66" height="2" fill="#8e8e8e"/>
<polyline points="442,224.5 435.5,240.5 432,249 428.5,256.5 425.5,272.5 426,283.7 424.5,299 424,303.5 423.5,311 423.6,348 426.5,404.5 464.5,404.5 469.5,350.5 474.5,315.5 479.5,350.5 485.5,404.5 523.5,404.5 526.2,348 526.2,311 525,303.5 525,299 524.5,272.5 520.5,256.5 517,249 514.5,240.5 506.5,224.5 442,224.5" fill="none" stroke="#108010" stroke-width="2"/>
<line x1="432" y1="249" x2="517" y2="249" stroke="#108010" stroke-width="2"/>
<line x1="425" y1="272.3" x2="524" y2="272.3" stroke="#108010" stroke-width="2"/>
<line x1="426" y1="283.7" x2="524" y2="283.7" stroke="#108010" stroke-width="2"/>
<line x1="424" y1="303.7" x2="525" y2="303.7" stroke="#108010" stroke-width="2"/>
<line x1="424" y1="352.5" x2="470" y2="352.5" stroke="#108010" stroke-width="2"/>
<line x1="479" y1="352.5" x2="526" y2="352.5" stroke="#108010" stroke-width="2"/>
<path d="M474.5,315 L469.5,350.5 M474.5,315 L479.5,350.5 M474.5,303 L474.5,315" stroke="#108010" stroke-width="2" fill="none"/>
<line x1="474.7" y1="209" x2="474.7" y2="362" stroke="#1818c0" stroke-width="1" stroke-dasharray="6,4"/>
<line x1="442" y1="224.5" x2="506.5" y2="224.5" stroke="#f088f0" stroke-width="2"/>
<rect x="439.9" y="221.8" width="5" height="5" fill="#ff0000"/>
<rect x="503.8" y="221.8" width="5" height="5" fill="#ff0000"/>
<rect x="432.8" y="237.8" width="5" height="5" fill="#ff0000"/>
<rect x="511.8" y="237.8" width="5" height="5" fill="#ff0000"/>
<rect x="425.9" y="253.8" width="5" height="5" fill="#ff0000"/>
<rect x="517.9" y="253.8" width="5" height="5" fill="#ff0000"/>
<rect x="422.8" y="269.8" width="5" height="5" fill="#ff0000"/>
<rect x="521.9" y="269.8" width="5" height="5" fill="#ff0000"/>
<rect x="421.5" y="296.5" width="5" height="5" fill="#ff0000"/>
<rect x="522.5" y="296.5" width="5" height="5" fill="#ff0000"/>
<rect x="472.0" y="300.7" width="5" height="5" fill="#ff0000"/>
<rect x="421.4" y="308.9" width="5" height="5" fill="#ff0000"/>
<rect x="523.7" y="308.9" width="5" height="5" fill="#ff0000"/>
<rect x="472.4" y="312.9" width="5" height="5" fill="#ff0000"/>
<rect x="421.1" y="345.6" width="5" height="5" fill="#ff0000"/>
<rect x="523.7" y="345.6" width="5" height="5" fill="#ff0000"/>
<rect x="466.8" y="347.7" width="5" height="5" fill="#ff0000"/>
<rect x="477.1" y="347.7" width="5" height="5" fill="#ff0000"/>
<rect x="424.0" y="401.9" width="5" height="5" fill="#ff0000"/>
<rect x="461.7" y="401.9" width="5" height="5" fill="#ff0000"/>
<rect x="483.0" y="401.9" width="5" height="5" fill="#ff0000"/>
<rect x="520.8" y="401.9" width="5" height="5" fill="#ff0000"/>
<text x="460" y="220.3" font-family="Liberation Sans" font-size="10.7" fill="#000">Waist</text>
<text x="457.7" y="267.7" font-family="Liberation Sans" font-size="10.7" fill="#000">Hip</text>
<text x="432.4" y="297" font-family="Liberation Sans" font-size="10.7" fill="#000">Thigh</text>
<text x="431.5" y="346.6" font-family="Liberation Sans" font-size="10.7" fill="#000">Knee</text>
<text x="433.4" y="401.2" font-family="Liberation Sans" font-size="10.7" fill="#000">Hem</text>
<polygon points="620.5,220 617.5,236.5 612,245 610.5,253.5 608.5,270.5 606.5,297.5 606.5,309.5 608.3,347 611.3,405 661.2,405 666.2,348.4 669,309.5 669,297.5 670.5,270.5 671,253.5 670,236.5 670,220" fill="url(#gbody)"/>
<polygon points="607,300 669,300 666,350 609,350" fill="#9cbc94"/>
<polygon points="613,302 668,302 660,349 616,349" fill="url(#gthigh)"/>
<polygon points="608.5,352 666,352 661.2,405 611.3,405" fill="url(#glow)"/>
<path d="M610,250 C604,265 604,285 608,300 L614,300 C610,285 610,265 614,250 Z" fill="#6a9a60" opacity="0.7"/>
<polygon points="616.7,204 668.7,204 670,219 620.7,219" fill="url(#gcone)"/>
<path d="M617,204 L624,219 M637.3,204 L642,219 M665.3,204 L665.3,219" stroke="#d03010" stroke-width="1"/>
<path d="M642,220 C642,250 640,270 639.5,302 L639,405" stroke="#c06030" stroke-width="0.6" fill="none"/>
<ellipse cx="639.3" cy="278.7" rx="28.7" ry="14.7" fill="none" stroke="#d03020" stroke-width="0.8"/>
<rect x="636" y="405" width="3" height="21" fill="#8e8e8e"/><rect x="603" y="425" width="68" height="2" fill="#8e8e8e"/>
<polyline points="620.5,220 617.5,236.5 612,245 610.5,253.5 608.5,270.5 606.5,297.5 606.5,309.5 608.3,347 611.3,405" fill="none" stroke="#108010" stroke-width="2"/>
<polyline points="670,220 670,236.5 671,253.5 670.5,270.5 669,297.5 669,309.5 666.2,348.4 661.2,405" fill="none" stroke="#108010" stroke-width="2"/>
<path d="M608.5,270.5 C612,285 620,297 639.5,302 C658,297 666,285 670.5,270.5" fill="none" stroke="#108010" stroke-width="2"/>
<path d="M620.5,220 C614,240 610,255 612,282" fill="none" stroke="#108010" stroke-width="2"/>
<line x1="612" y1="244.7" x2="672" y2="244.7" stroke="#108010" stroke-width="2"/>
<line x1="608" y1="270" x2="672" y2="270" stroke="#108010" stroke-width="2"/>
<line x1="612" y1="282" x2="668" y2="282" stroke="#108010" stroke-width="2"/>
<line x1="606" y1="301.7" x2="670" y2="301.7" stroke="#108010" stroke-width="2"/>
<line x1="608" y1="352.3" x2="666" y2="352.3" stroke="#108010" stroke-width="2"/>
<line x1="611" y1="405" x2="661" y2="405" stroke="#108010" stroke-width="2"/>
<line x1="620.5" y1="220" x2="670" y2="220" stroke="#f088f0" stroke-width="2"/>
<rect x="618.0" y="217.5" width="5" height="5" fill="#ff0000"/>
<rect x="667.5" y="217.5" width="5" height="5" fill="#ff0000"/>
<rect x="613.3" y="234.0" width="8" height="5" fill="#ff0000"/>
<rect x="666.0" y="234.0" width="8" height="5" fill="#ff0000"/>
<rect x="606.7" y="250.8" width="8" height="5" fill="#ff0000"/>
<rect x="666.7" y="250.8" width="8" height="5" fill="#ff0000"/>
<rect x="605.4" y="267.9" width="6" height="5" fill="#ff0000"/>
<rect x="667.9" y="267.9" width="5" height="5" fill="#ff0000"/>
<rect x="609.9" y="279.8" width="5" height="5" fill="#ff0000"/>
<rect x="664.8" y="279.8" width="5" height="5" fill="#ff0000"/>
<rect x="603.9" y="294.8" width="5" height="5" fill="#ff0000"/>
<rect x="619.9" y="293.9" width="5" height="5" fill="#ff0000"/>
<rect x="654.2" y="293.9" width="5" height="5" fill="#ff0000"/>
<rect x="666.4" y="294.8" width="5" height="5" fill="#ff0000"/>
<rect x="636.8" y="299.8" width="5" height="5" fill="#ff0000"/>
<rect x="603.9" y="307.0" width="5" height="5" fill="#ff0000"/>
<rect x="666.8" y="307.0" width="5" height="5" fill="#ff0000"/>
<rect x="605.8" y="344.6" width="5" height="5" fill="#ff0000"/>
<rect x="663.7" y="345.9" width="5" height="5" fill="#ff0000"/>
<rect x="608.8" y="402.7" width="5" height="5" fill="#ff0000"/>
<rect x="658.7" y="402.7" width="5" height="5" fill="#ff0000"/>
<path d="M545.5,220.3 L620,220.3 M545.5,220.3 L545.5,405 L611,405 M570.4,220.3 L570.4,405 M567,302.3 L606,302.3 M595.3,232.3 L595.3,405 M593,294 L640,294 M595.3,352.3 L608,352.3 M700.4,266 L700.4,318 L672,303 L656,296 M701,346.8 L701,395 M701,346.8 L639.5,302" fill="none" stroke="#d02828" stroke-width="1"/>
<path d="M568.4,224.5 L570.4,220.3 L572.4,224.5 M568.4,298 L570.4,302.3 L572.4,298 M568.4,306.5 L570.4,302.3 L572.4,306.5 M593.3,298 L595.3,294 L597.3,298 M593.3,298.5 L595.3,302.3 L597.3,298.5 M593.3,348 L595.3,352.3 L597.3,348 M593.3,401 L595.3,405 L597.3,401 M593.3,236.5 L595.3,232.3 L597.3,236.5" fill="none" stroke="#d02828" stroke-width="0.8"/>
<text x="539.2" y="303" transform="rotate(-90 539.2 303)" text-anchor="middle" dominant-baseline="central" font-family="Liberation Sans" font-size="10.7" fill="#000">Height(length)</text>
<text x="564" y="259" transform="rotate(-90 564 259)" text-anchor="middle" dominant-baseline="central" font-family="Liberation Sans" font-size="10.7" fill="#000">Height(Rise)</text>
<text x="588" y="255.7" transform="rotate(-90 588 255.7)" text-anchor="middle" dominant-baseline="central" font-family="Liberation Sans" font-size="10.7" fill="#000">Crotch Gap</text>
<text x="563.7" y="352.3" transform="rotate(-90 563.7 352.3)" text-anchor="middle" dominant-baseline="central" font-family="Liberation Sans" font-size="10.7" fill="#000">Height(Inseam)</text>
<text x="577.9" y="328.3" transform="rotate(-90 577.9 328.3)" text-anchor="middle" dominant-baseline="central" font-family="Liberation Sans" font-size="10.7" fill="#000">Height</text>
<text x="589" y="327.1" transform="rotate(-90 589 327.1)" text-anchor="middle" dominant-baseline="central" font-family="Liberation Sans" font-size="10.7" fill="#000">(Crotch-Knee)</text>
<text x="577.6" y="395.7" transform="rotate(-90 577.6 395.7)" text-anchor="middle" dominant-baseline="central" font-family="Liberation Sans" font-size="10.7" fill="#000">Height</text>
<text x="588.1" y="394.5" transform="rotate(-90 588.1 394.5)" text-anchor="middle" dominant-baseline="central" font-family="Liberation Sans" font-size="10.7" fill="#000">(Knee-Hem)</text>
<text x="683.3" y="281.3" transform="rotate(-90 683.3 281.3)" text-anchor="middle" dominant-baseline="central" font-family="Liberation Sans" font-size="10.7" fill="#000">Crotch</text>
<text x="695.3" y="281" transform="rotate(-90 695.3 281)" text-anchor="middle" dominant-baseline="central" font-family="Liberation Sans" font-size="10.7" fill="#000">Mannequin</text>
<text x="678" y="381.5" transform="rotate(-90 678 381.5)" text-anchor="middle" dominant-baseline="central" font-family="Liberation Sans" font-size="10.7" fill="#000">Crotch</text>
<text x="690" y="377" transform="rotate(-90 690 377)" text-anchor="middle" dominant-baseline="central" font-family="Liberation Sans" font-size="10.7" fill="#000">Garment</text>
</svg><!--/DIMG-->
</body></html>
